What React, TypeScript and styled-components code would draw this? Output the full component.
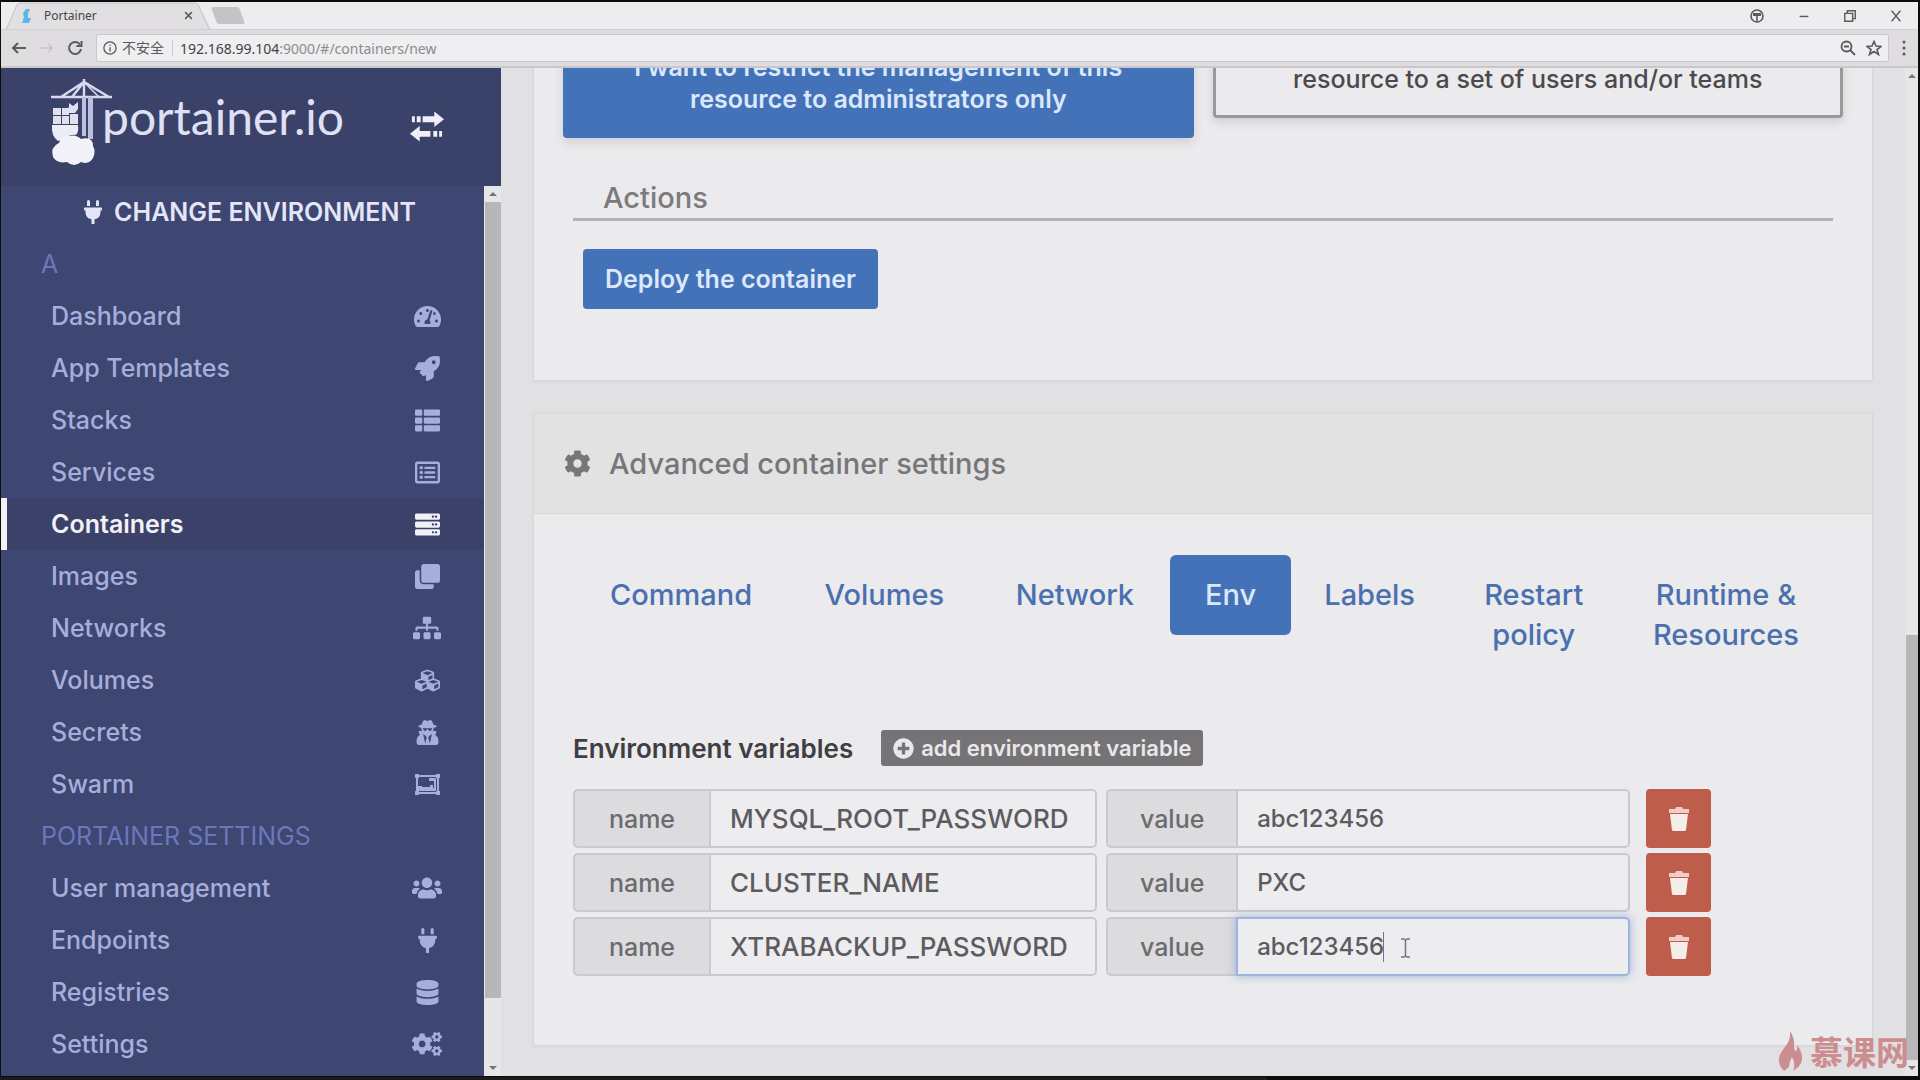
import React from "react";
import styled, { createGlobalStyle, css } from "styled-components";
import {
  FaTachometerAlt, FaRocket, FaThList, FaRegListAlt, FaServer, FaClone, FaSitemap, FaCubes,
  FaUserSecret, FaUsers, FaPlug, FaDatabase, FaCogs, FaCog, FaPlusCircle,
} from "react-icons/fa";

const sans = `Inter, "Open Sans", "Noto Sans CJK SC", sans-serif`;
const chromeSans = `"Noto Sans", "Open Sans", "Noto Sans CJK SC", sans-serif`;
const blue = "#4472b8";

const Global = createGlobalStyle`
  *, *::before, *::after { box-sizing: border-box; }
  body { margin: 0; background: #000; }
  button, input { font: inherit; color: inherit; }
`;

const Window = styled.div`
  height: 100vh;
  padding: 2px 2px 4px 1px;
  background: #0c0c0d;
  display: flex;
  flex-direction: column;
  overflow: hidden;
  position: relative;
  font-family: ${sans};
  font-size: 25px;
`;

/* ---------- browser chrome ---------- */

const TabStrip = styled.div`
  height: 28px;
  flex: none;
  display: flex;
  align-items: center;
  background: #edecee;
  border-bottom: 1px solid #d2d0d2;
  font-family: ${chromeSans};
`;

const BrowserTab = styled.div`
  position: relative;
  width: 206px;
  height: 28px;
  margin-left: 4px;
  padding: 0 18px 0 16px;
  display: flex;
  align-items: center;
  gap: 11px;
  font-size: 12px;
  color: #454446;
  & > * { position: relative; }
`;

const TabShape = styled.svg`
  && { position: absolute; }
  inset: 0;
  width: 100%;
  height: 100%;
`;

const TabTitle = styled.span`
  flex: 1;
`;

const ChromeButton = styled.button`
  border: 0;
  padding: 0;
  background: none;
  display: flex;
  color: #5a595b;
`;

const NewTab = styled.button`
  width: 28px;
  height: 17px;
  margin-left: 3px;
  padding: 0;
  border: 0;
  border-radius: 2px;
  background: #c4c3c5;
  transform: skewX(20deg);
`;

const WindowControls = styled.div`
  margin-left: auto;
  padding-right: 15px;
  display: flex;
  align-items: center;
  gap: 32px;
`;

const Toolbar = styled.div`
  height: 38px;
  flex: none;
  display: flex;
  align-items: center;
  gap: 13px;
  padding: 0 12px 0 10px;
  background: #dfdddf;
  border-bottom: 2px solid #c9c7c9;
  font-family: ${chromeSans};
`;

const Omnibox = styled.div`
  flex: 1;
  height: 28px;
  display: flex;
  align-items: center;
  padding: 0 6px;
  background: #efeef0;
  border: 1px solid #cbc9cb;
  border-radius: 2px;
  font-size: 14px;
  color: #8c8b8d;
`;

const SiteStatus = styled.span`
  display: flex;
  align-items: center;
  gap: 5px;
  padding-right: 8px;
  margin-right: 7px;
  border-right: 1px solid #cbc9cb;
  line-height: 16px;
  color: #59585a;
`;

const Host = styled.span`
  color: #434244;
`;

const OmniActions = styled.span`
  margin-left: auto;
  display: flex;
  gap: 10px;
`;

/* ---------- page frame ---------- */

const Page = styled.div`
  flex: 1;
  min-height: 0;
  display: flex;
  background: #e1e0e2;
`;

const Sidebar = styled.aside`
  width: 500px;
  flex: none;
  display: flex;
  flex-direction: column;
`;

const Brand = styled.header`
  height: 118px;
  flex: none;
  display: flex;
  align-items: flex-start;
  padding: 10px 56px 0 49px;
  background: #3b4269;
  color: #f0f0f8;
`;

const BrandName = styled.span`
  font-family: Lato, ${sans};
  font-size: 48px;
  line-height: 58px;
  margin: 10px auto 0 -14px;
  color: #dfe0f3;
`;

const ToggleButton = styled.button`
  border: 0;
  padding: 0;
  margin-top: 33px;
  background: none;
  display: flex;
`;

const SidebarBody = styled.div`
  flex: 1;
  min-height: 0;
  display: flex;
`;

const Menu = styled.nav`
  flex: 1;
  overflow: hidden;
  background: #3e4672;
`;

const rowBase = css`
  height: 52px;
  display: flex;
  align-items: center;
`;

const EnvironmentLink = styled.a`
  ${rowBase}
  justify-content: center;
  gap: 9px;
  padding-left: 12px;
  color: #e4e5f6;
  font-weight: 600;
  text-decoration: none;
`;

const MenuHeading = styled.div`
  ${rowBase}
  padding-left: 40px;
  color: #6c77bb;
`;

const MenuLink = styled.a<{ $active?: boolean }>`
  ${rowBase}
  justify-content: space-between;
  padding: 0 41px 0 44px;
  border-left: 6px solid ${(p) => (p.$active ? "#f2f1f6" : "transparent")};
  background: ${(p) => (p.$active ? "#3b4169" : "transparent")};
  color: ${(p) => (p.$active ? "#f2f1f6" : "#a8aedb")};
  font-weight: ${(p) => (p.$active ? 600 : 500)};
  text-decoration: none;
`;

const MenuIcon = styled.span`
  width: 32px;
  display: flex;
  justify-content: center;
`;

const ScrollTrack = styled.div<{ $width: number }>`
  width: ${(p) => p.$width}px;
  flex: none;
  display: flex;
  flex-direction: column;
  align-items: center;
  background: #e6e5e7;
`;

const ScrollArrow = styled.span<{ $down?: boolean }>`
  height: 16px;
  display: flex;
  align-items: center;
  &::before {
    content: "";
    border: 4px solid transparent;
    border-top-width: ${(p) => (p.$down ? "4px" : "0")};
    border-bottom-width: ${(p) => (p.$down ? "0" : "4px")};
    border-top-color: ${(p) => (p.$down ? "#777" : "transparent")};
    border-bottom-color: ${(p) => (p.$down ? "transparent" : "#777")};
  }
`;

const ScrollThumb = styled.div<{ $before: number; $size: number; $after: number }>`
  flex: 1;
  width: 100%;
  display: flex;
  flex-direction: column;
  &::before { content: ""; flex: ${(p) => p.$before} 0 0; }
  & > span { flex: ${(p) => p.$size} 0 0; background: #b7b6b8; margin-left: 1px; }
  &::after { content: ""; flex: ${(p) => p.$after} 0 0; }
`;

/* ---------- main content ---------- */

const Main = styled.main`
  flex: 1;
  min-width: 0;
  min-height: 0;
  overflow: hidden;
  display: flex;
  flex-direction: column;
  justify-content: flex-end;
  gap: 32px;
  padding: 0 32px 30px;
`;

const Panel = styled.section`
  flex: none;
  background: #ebeaec;
  border: 1px solid #d8d7d9;
  box-shadow: 0 1px 2px rgba(0, 0, 0, 0.06);
`;

const PanelHead = styled.h2`
  height: 100px;
  margin: 0;
  padding: 0 30px;
  display: flex;
  align-items: center;
  gap: 18px;
  background: #e2e2e2;
  border-bottom: 1px solid #dad9da;
  color: #78767a;
  font-size: 29px;
  font-weight: 500;
`;

const AccessForm = styled.div`
  padding: 0 29px 71px;
`;

const AccessChoices = styled.div`
  display: grid;
  grid-template-columns: repeat(2, minmax(0, 1fr));
  align-items: start;
  gap: 19px;
`;

const AccessCard = styled.button<{ $selected?: boolean }>`
  padding: ${(p) => (p.$selected ? "20px 60px" : "32px 60px 20px")};
  border: 3px solid ${(p) => (p.$selected ? blue : "#9a989b")};
  border-radius: 4px;
  box-shadow: 0 4px 10px rgba(60, 60, 80, 0.16);
  background: ${(p) => (p.$selected ? blue : "#ebeaec")};
  color: ${(p) => (p.$selected ? "#dbe8fb" : "#4b494d")};
  font-weight: ${(p) => (p.$selected ? 600 : 500)};
  line-height: 32px;
  text-align: center;
`;

const FormSection = styled.div`
  margin: 41px 10px 0;
`;

const SectionTitle = styled.h3`
  margin: 0 0 28px;
  padding: 0 30px 2px;
  border-bottom: 3px solid #b3b1b4;
  color: #7c7a7d;
  font-size: 29px;
  font-weight: 500;
  line-height: 37px;
`;

const DeployButton = styled.button`
  height: 60px;
  margin-left: 10px;
  padding: 0 22px;
  border: 0;
  border-radius: 4px;
  background: ${blue};
  color: #dbe8fb;
  font-weight: 600;
`;

const SettingsBody = styled.div`
  padding: 41px 39px 69px;
`;

const Tabs = styled.nav`
  display: grid;
  grid-template-columns: 216fr 190fr 191fr 120fr 158fr 170fr 214fr;
  align-items: start;
`;

const TabLink = styled.a<{ $active?: boolean }>`
  padding: 20px 28px;
  border-radius: 6px;
  background: ${(p) => (p.$active ? blue : "transparent")};
  color: ${(p) => (p.$active ? "#dbe8fb" : "#4a70b0")};
  font-size: 29px;
  font-weight: 500;
  line-height: 40px;
  text-align: center;
  text-decoration: none;
`;

const VariablesHead = styled.div`
  height: 36px;
  margin: 55px 0 23px;
  display: flex;
  align-items: center;
  gap: 28px;
  color: #403e42;
  font-size: 26px;
  font-weight: 600;
`;

const AddButton = styled.button`
  height: 36px;
  padding: 0 12px;
  display: flex;
  align-items: center;
  gap: 7px;
  border: 0;
  border-radius: 3px;
  background: #757376;
  color: #e9e8ea;
  font-size: 22px;
  font-weight: 600;
`;

const VariableRows = styled.div`
  display: flex;
  flex-direction: column;
  gap: 5px;
`;

const VariableRow = styled.div`
  display: flex;
  gap: 9px;
`;

const InputGroup = styled.div`
  position: relative;
  width: 41.6%;
  height: 59px;
  display: flex;
`;

const Addon = styled.label<{ $wide?: boolean }>`
  width: ${(p) => (p.$wide ? 136 : 130)}px;
  flex: none;
  display: flex;
  align-items: center;
  justify-content: center;
  border: 2px solid #cbc9cc;
  border-right: 0;
  border-radius: 5px 0 0 5px;
  background: #dcdbdd;
  color: #6d6b6f;
  font-weight: 500;
`;

const TextInput = styled.input<{ $numeric?: boolean; $focused?: boolean }>`
  flex: 1;
  min-width: 0;
  padding: 0 19px;
  border: 2px solid ${(p) => (p.$focused ? "#9db4dd" : "#cbc9cc")};
  border-radius: 0 5px 5px 0;
  outline: 0;
  background: #edecee;
  box-shadow: ${(p) => (p.$focused ? "0 0 8px rgba(90, 135, 215, 0.55)" : "none")};
  color: #5d5b5f;
  font-size: ${(p) => (p.$numeric ? 24 : 26)}px;
  font-weight: 500;
`;

const Pointer = styled.svg`
  position: absolute;
  left: 276px;
  top: 13px;
  pointer-events: none;
`;

const DeleteButton = styled.button`
  width: 65px;
  height: 59px;
  margin-left: 7px;
  padding: 0;
  display: flex;
  align-items: center;
  justify-content: center;
  border: 0;
  border-radius: 4px;
  background: #be5d4b;
`;

const Watermark = styled.div`
  position: absolute;
  right: 11px;
  bottom: 8px;
  display: flex;
  align-items: center;
  gap: 7px;
  color: #cc8d8f;
  font-family: "Noto Sans CJK SC", sans-serif;
  font-size: 33px;
  font-weight: 700;
  line-height: 42px;
`;

const TaskbarEdge = styled.div`
  position: absolute;
  left: 0;
  bottom: 0;
  width: 66%;
  height: 3px;
  background: #1b1b1c;
`;

/* ---------- drawings ---------- */

const Stroke = (p: { size?: number; children: React.ReactNode; color?: string; w?: number }) => (
  <svg width={p.size ?? 16} height={p.size ?? 16} viewBox="0 0 16 16" fill="none"
    stroke={p.color ?? "#5a595b"} strokeWidth={p.w ?? 1.6}>{p.children}</svg>
);

const CraneLogo = () => (
  <svg width="66" height="90" viewBox="0 0 66 90" fill="none">
    <g stroke="#d9daf0" strokeWidth="2.4">
      <path d="M1 19H62M34 1V20M11 19L34 4L59 19M22 19L34 4" />
      <path d="M49 19L34 4" strokeWidth="1.6" />
    </g>
    <path d="M32 19H36V58H32zM38 19H43V61H38z" fill="#bcc0de" />
    <path d="M19 25l4 3 5-4v7l-3 4h-6l-3-3 3-3z" fill="#dfe0f1" />
    <path d="M3 30h8v7H3zM12 30h7v7h-7zM3 38h8v8H3zM12 38h7v8h-7zM20 36h8v10h-8z" fill="#e0e0ef" />
    <path d="M2 47H28Q29 54 26 57Q20 56 15 61L8 63Q1 58 2 47Z" fill="#ececf5" />
    <path d="M9 65Q11 58 19 58Q26 56 31 61Q43 58 43 68Q46 73 43 80Q39 87 31 84Q24 90 17 84Q7 86 3 79Q0 69 9 65Z" fill="#f3f2f8" />
  </svg>
);

const TransferIcon = () => (
  <svg width="36" height="32" viewBox="0 0 37 32" fill="#efeff8">
    <path d="M3 5h3v6H3zM8 5h4v6H8zM14 5h12V0l10 8-10 8v-5H14zM34 20h-3v6h3zM29 20h-4v6h4zM22 20H11v-5L1 23l10 8v-5h11z" />
  </svg>
);

const GroupIcon = ({ size }: { size?: number }) => (
  <svg width={size} height={size} viewBox="0 0 25 25" fill="currentColor">
    <path fillRule="evenodd" d="M0 2h4v1h17V2h4v4h-1v13h1v4h-4v-1H4v1H0v-4h1V6H0zM3 6v13h1v1h17v-1h1V6h-1V5H4v1z" />
    <path d="M14 6h7v13H6v-4h9v-2h3v3h1V9h-5z" />
    <path d="M3 14h4v5H3z" />
  </svg>
);

const TrashIcon = () => (
  <svg width="22" height="26" viewBox="0 0 22 26">
    <path d="M1 3h6l1-2h6l1 2h6v4H1z" fill="#f2cdc6" />
    <path d="M2 8h18l-2 16q0 1-2 1H6q-2 0-2-1z" fill="#f6ecea" />
  </svg>
);

const Flame = () => (
  <svg width="25" height="40" viewBox="0 0 25 40" fill="#cc8d8f">
    <path d="M12 0Q17 8 16 15Q16 20 18 20Q20 18 19 14Q25 22 24 29Q23 35 15 40Q18 33 14 26Q11 32 11 36L6 40Q0 34 1 27Q2 22 7 16Q13 9 12 0Z" />
  </svg>
);

/* ---------- data ---------- */

type Item = { label: string; icon: React.ComponentType<{ size?: number }>; size?: number; active?: boolean };

const resources: Item[] = [
  { label: "Dashboard", icon: FaTachometerAlt, size: 27 },
  { label: "App Templates", icon: FaRocket },
  { label: "Stacks", icon: FaThList },
  { label: "Services", icon: FaRegListAlt },
  { label: "Containers", icon: FaServer, active: true },
  { label: "Images", icon: FaClone },
  { label: "Networks", icon: FaSitemap, size: 28 },
  { label: "Volumes", icon: FaCubes },
  { label: "Secrets", icon: FaUserSecret },
  { label: "Swarm", icon: GroupIcon },
];

const settings: Item[] = [
  { label: "User management", icon: FaUsers, size: 30 },
  { label: "Endpoints", icon: FaPlug },
  { label: "Registries", icon: FaDatabase },
  { label: "Settings", icon: FaCogs, size: 30 },
];

const tabs = ["Command", "Volumes", "Network", "Env", "Labels", "Restart policy", "Runtime & Resources"];

const variables = [
  { name: "MYSQL_ROOT_PASSWORD", value: "abc123456" },
  { name: "CLUSTER_NAME", value: "PXC" },
  { name: "XTRABACKUP_PASSWORD", value: "abc123456" },
];

const MenuItem = ({ label, icon: Icon, size = 25, active }: Item) => (
  <MenuLink href="#" $active={active}>
    {label}
    <MenuIcon><Icon size={size} /></MenuIcon>
  </MenuLink>
);

export default function App() {
  return (
    <Window>
      <Global />
      <TabStrip>
        <BrowserTab>
          <TabShape viewBox="0 0 208 28" preserveAspectRatio="none">
            <path d="M1 28L12 3Q13 1 16 1H191Q194 1 195 3L207 28Z" fill="#e1dfe1" stroke="#c2c0c2" />
          </TabShape>
          <svg width="12" height="16" viewBox="0 0 12 16">
            <path d="M5 1H9L7 6V10H10L8 15H1L3 9L2 5Z" fill="#5fb5e6" />
          </svg>
          <TabTitle>Portainer</TabTitle>
          <ChromeButton aria-label="Close tab"><Stroke size={9} w={2.6}><path d="M2 2L14 14M14 2L2 14" /></Stroke></ChromeButton>
        </BrowserTab>
        <NewTab aria-label="New tab" />
        <WindowControls>
          <ChromeButton aria-label="Profile">
            <Stroke><circle cx="8" cy="8" r="6" /><path d="M4 6.500H12" strokeWidth="3" /><path d="M8 8V14" /></Stroke>
          </ChromeButton>
          <ChromeButton aria-label="Minimize"><Stroke size={14}><path d="M3 8.500H13" /></Stroke></ChromeButton>
          <ChromeButton aria-label="Restore"><Stroke size={14}><path d="M2 5H11V14H2ZM5 5V2H14V11H11" /></Stroke></ChromeButton>
          <ChromeButton aria-label="Close"><Stroke size={14}><path d="M3 2L13 14M13 2L3 14" /></Stroke></ChromeButton>
        </WindowControls>
      </TabStrip>
      <Toolbar>
        <ChromeButton aria-label="Back"><Stroke w={2}><path d="M15 8H2M7 3L2 8L7 13" /></Stroke></ChromeButton>
        <ChromeButton aria-label="Forward"><Stroke size={14} color="#c3c1c3"><path d="M1 8H14M9 3L14 8L9 13" /></Stroke></ChromeButton>
        <ChromeButton aria-label="Reload">
          <Stroke w={2}><path d="M13 4.500A6 6 0 1 0 14 9" /><path d="M14.500 1V6H9.500" /></Stroke>
        </ChromeButton>
        <Omnibox>
          <SiteStatus>
            <Stroke size={14} w={1.500}><circle cx="8" cy="8" r="7" /><path d="M8 7V12M8 4V5.500" /></Stroke>
            不安全
          </SiteStatus>
          <Host>192.168.99.104</Host>:9000/#/containers/new
          <OmniActions>
            <Stroke w={1.800}><circle cx="6.500" cy="6.500" r="5" /><path d="M10 10L15 15M4 6.500H9" /></Stroke>
            <Stroke><path d="M8 1.500L10 6L15 6.500L11 9.500L12.500 14.500L8 11.500L3.500 14.500L5 9.500L1 6.500L6 6Z" /></Stroke>
          </OmniActions>
        </Omnibox>
        <ChromeButton aria-label="Browser menu">
          <svg width="4" height="16" viewBox="0 0 4 16" fill="#5a595b">
            <circle cx="2" cy="2" r="1.500" /><circle cx="2" cy="8" r="1.500" /><circle cx="2" cy="14" r="1.500" />
          </svg>
        </ChromeButton>
      </Toolbar>

      <Page>
        <Sidebar>
          <Brand>
            <CraneLogo />
            <BrandName>portainer.io</BrandName>
            <ToggleButton aria-label="Toggle sidebar"><TransferIcon /></ToggleButton>
          </Brand>
          <SidebarBody>
            <Menu>
              <EnvironmentLink href="#"><FaPlug size={24} />CHANGE ENVIRONMENT</EnvironmentLink>
              <MenuHeading>A</MenuHeading>
              {resources.map((item) => <MenuItem key={item.label} {...item} />)}
              <MenuHeading>PORTAINER SETTINGS</MenuHeading>
              {settings.map((item) => <MenuItem key={item.label} {...item} />)}
            </Menu>
            <ScrollTrack $width={17}>
              <ScrollArrow />
              <ScrollThumb $before={0} $size={795} $after={62}><span /></ScrollThumb>
              <ScrollArrow $down />
            </ScrollTrack>
          </SidebarBody>
        </Sidebar>

        <Main>
          <Panel>
            <AccessForm>
              <AccessChoices>
                <AccessCard $selected>I want to restrict the management of this resource to administrators only</AccessCard>
                <AccessCard>resource to a set of users and/or teams</AccessCard>
              </AccessChoices>
              <FormSection>
                <SectionTitle>Actions</SectionTitle>
                <DeployButton>Deploy the container</DeployButton>
              </FormSection>
            </AccessForm>
          </Panel>
          <Panel>
            <PanelHead><FaCog size={27} />Advanced container settings</PanelHead>
            <SettingsBody>
              <Tabs>
                {tabs.map((tab) => <TabLink key={tab} href="#" $active={tab === "Env"}>{tab}</TabLink>)}
              </Tabs>
              <VariablesHead>
                Environment variables
                <AddButton><FaPlusCircle size={21} />add environment variable</AddButton>
              </VariablesHead>
              <VariableRows>
                {variables.map((v, i) => (
                  <VariableRow key={v.name}>
                    <InputGroup>
                      <Addon $wide htmlFor={`name-${i}`}>name</Addon>
                      <TextInput id={`name-${i}`} defaultValue={v.name} />
                    </InputGroup>
                    <InputGroup>
                      <Addon htmlFor={`value-${i}`}>value</Addon>
                      <TextInput id={`value-${i}`} defaultValue={v.value} $numeric $focused={i === 2} />
                      {i === 2 && (
                        <Pointer width="30" height="34" viewBox="0 0 30 34" fill="none" stroke="#77757a">
                          <path d="M1.500 2V32" />
                          <path d="M19 9H22L23.500 10L25 9H28M23.500 10V26M19 27H22L23.500 26L25 27H28" strokeWidth="1.500" />
                        </Pointer>
                      )}
                    </InputGroup>
                    <DeleteButton aria-label={`Remove ${v.name}`}><TrashIcon /></DeleteButton>
                  </VariableRow>
                ))}
              </VariableRows>
            </SettingsBody>
          </Panel>
        </Main>
        <ScrollTrack $width={13}>
          <ScrollArrow />
          <ScrollThumb $before={550} $size={425} $after={0}><span /></ScrollThumb>
          <ScrollArrow $down />
        </ScrollTrack>
      </Page>
      <Watermark><Flame />慕课网</Watermark>
      <TaskbarEdge />
    </Window>
  );
}
